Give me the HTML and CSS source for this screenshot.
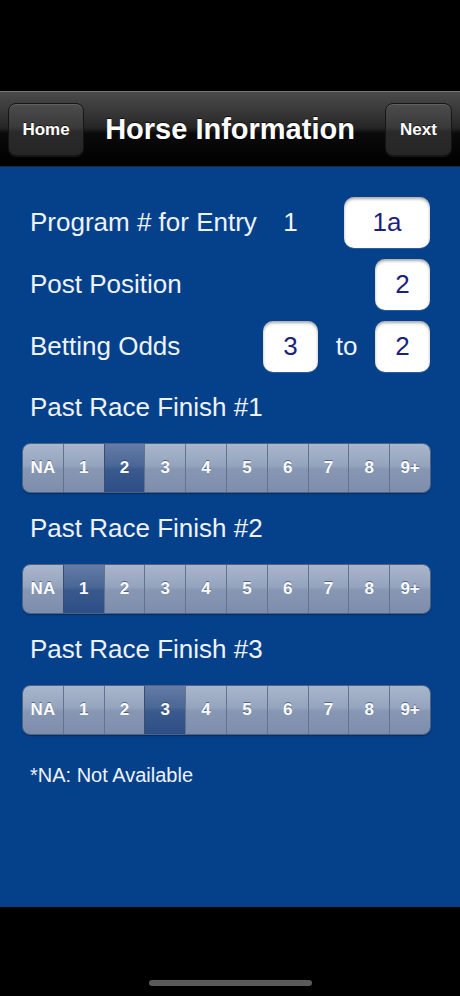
FILE: index.html
```html
<!DOCTYPE html>
<html>
<head>
<meta charset="utf-8">
<link rel="stylesheet" href="styles.css">
</head>
<body>
<div class="screen">
  <div class="status"></div>
  <header class="navbar">
    <button class="nav-btn home">Home</button>
    <h1 class="title">Horse Information</h1>
    <button class="nav-btn next">Next</button>
  </header>
  <main class="content">
    <div class="row">
      <span class="label">Program # for Entry</span>
      <span class="num">1</span>
      <span class="spacer"></span>
      <span class="box wide">1a</span>
    </div>
    <div class="row">
      <span class="label">Post Position</span>
      <span class="box">2</span>
    </div>
    <div class="row">
      <span class="label">Betting Odds</span>
      <span class="box">3</span>
      <span class="to">to</span>
      <span class="box">2</span>
    </div>

    <div class="section-label">Past Race Finish #1</div>
    <div class="seg">
      <span>NA</span><span>1</span><span class="on">2</span><span>3</span><span>4</span><span>5</span><span>6</span><span>7</span><span>8</span><span>9+</span>
    </div>
    <div class="section-label">Past Race Finish #2</div>
    <div class="seg">
      <span>NA</span><span class="on">1</span><span>2</span><span>3</span><span>4</span><span>5</span><span>6</span><span>7</span><span>8</span><span>9+</span>
    </div>
    <div class="section-label">Past Race Finish #3</div>
    <div class="seg">
      <span>NA</span><span>1</span><span>2</span><span class="on">3</span><span>4</span><span>5</span><span>6</span><span>7</span><span>8</span><span>9+</span>
    </div>
    <p class="note">*NA: Not Available</p>
  </main>
  <footer class="bottom">
    <div class="indicator"></div>
  </footer>
</div>
</body>
</html>
```
FILE: styles.css
```css
html, body {
  margin: 0;
  padding: 0;
  background: #000;
}
body {
  font-family: "Liberation Sans", Arial, sans-serif;
}
.screen {
  width: 460px;
  height: 996px;
  display: flex;
  flex-direction: column;
  background: #000;
}
.status {
  height: 91px;
  background: #000;
}
.navbar {
  height: 76px;
  box-sizing: border-box;
  display: grid;
  grid-template-columns: 1fr auto 1fr;
  align-items: center;
  padding: 0 8px 0 8px;
  border-top: 1px solid #777;
  border-bottom: 1px solid #1a2a44;
  background: linear-gradient(to bottom, #4a4a4a 0%, #353535 30%, #262626 48%, #0a0a0a 56%, #000 100%);
}
.nav-btn {
  font-family: "Liberation Sans", Arial, sans-serif;
  font-weight: bold;
  font-size: 17px;
  color: #fff;
  height: 53px;
  border: 1px solid #151515;
  border-radius: 8px;
  background: linear-gradient(to bottom, #4c4c4c 0%, #3a3a3a 45%, #2a2a2a 55%, #262626 100%);
  box-shadow: inset 0 1px 0 rgba(255,255,255,0.12), 0 1px 0 rgba(255,255,255,0.08);
  text-shadow: 0 -1px 0 rgba(0,0,0,0.6);
  padding: 2px 0 0 0;
  margin-top: 0;
}
.home {
  width: 76px;
  justify-self: start;
}
.next {
  width: 67px;
  justify-self: end;
}
.title {
  margin: 0;
  font-size: 29px;
  font-weight: bold;
  color: #fff;
  text-shadow: 0 -1px 0 rgba(0,0,0,0.7);
  letter-spacing: 0;
}
.content {
  height: 740px;
  box-sizing: border-box;
  background: #05418a;
  padding: 30px 30px 0 30px;
  color: #eef2fa;
}
.row {
  display: flex;
  align-items: center;
  height: 51px;
  margin-bottom: 11px;
}
.row:nth-child(3) {
  margin-bottom: 0;
}
.label {
  flex: 1;
  font-size: 26px;
}
.num {
  width: 55px;
  text-align: center;
  font-size: 26px;
}
.spacer {
  width: 26px;
}
.to {
  width: 57px;
  text-align: center;
  font-size: 26px;
}
.box {
  width: 55px;
  height: 51px;
  box-sizing: border-box;
  display: flex;
  align-items: center;
  justify-content: center;
  background: #fff;
  border-radius: 10px;
  box-shadow: inset 0 2px 3px rgba(0,0,0,0.35), 0 1px 0 rgba(255,255,255,0.15);
  color: #1d1f7c;
  font-size: 26px;
}
.box.wide {
  width: 86px;
}
.section-label {
  font-size: 26px;
  height: 40px;
  line-height: 40px;
  margin-top: 15px;
}
.seg {
  margin: 16px -1px 0 -8px;
  height: 50px;
  box-sizing: border-box;
  display: flex;
  border: 1px solid #4f6286;
  border-radius: 8px;
  overflow: hidden;
  box-shadow: 0 1px 1px rgba(0,0,0,0.3);
}
.seg span {
  flex: 1;
  display: flex;
  align-items: center;
  justify-content: center;
  font-weight: bold;
  font-size: 17px;
  color: #fbfcfe;
  text-shadow: 0 -1px 0 rgba(40,55,90,0.6);
  background: linear-gradient(to bottom, #a9b6cc 0%, #95a4be 45%, #8797b3 52%, #7d8ead 100%);
  border-left: 1px solid #62728f;
}
.seg span:first-child {
  border-left: none;
}
.seg span.on {
  background: linear-gradient(to bottom, #647ca6 0%, #4b6796 45%, #3a5a8d 52%, #2d4e86 100%);
  border-left-color: #3a4c70;
}
.note {
  margin: 28px 0 0 0;
  font-size: 20px;
  line-height: 24px;
}
.bottom {
  flex: 1;
  background: #000;
  position: relative;
}
.indicator {
  position: absolute;
  left: 149px;
  top: 73px;
  width: 163px;
  height: 6px;
  border-radius: 3px;
  background: #5a5a5a;
}
```
